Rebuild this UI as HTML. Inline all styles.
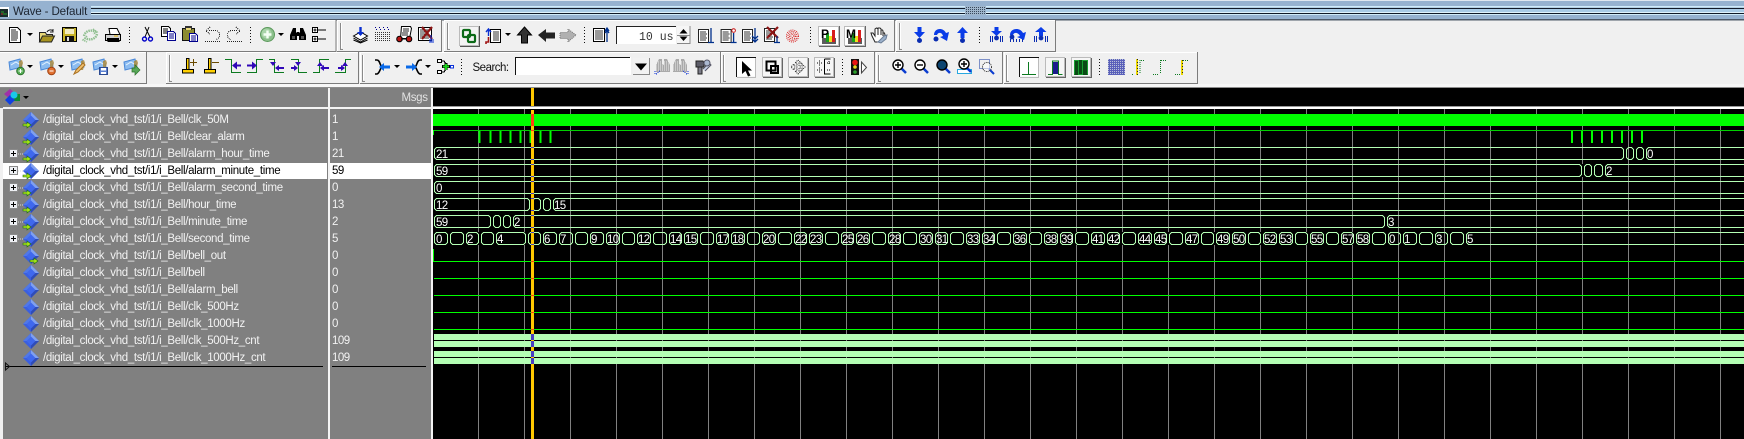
<!DOCTYPE html>
<html><head><meta charset="utf-8"><title>Wave - Default</title>
<style>
html,body{margin:0;padding:0;background:#f0f0f0;width:1744px;height:439px;overflow:hidden}
svg{display:block;position:absolute;left:0;top:0}
text{font-family:"Liberation Sans",Arial,sans-serif}
.n{font-size:11.5px;letter-spacing:-.33px;fill:#f2f2f2}
.v{font-size:11.5px;letter-spacing:-.5px;fill:#f2f2f2}
.w{font-size:11.5px;letter-spacing:-.6px;fill:#fff}
.c{shape-rendering:crispEdges}
</style></head><body>
<svg width="1744" height="439" viewBox="0 0 1744 439" xmlns="http://www.w3.org/2000/svg">
<defs>
<g id="x"><rect x="-3" y="0" width="6" height="13" fill="#000"/><path d="M-3.500.5l2 2v8l-2 2M3.500.5l-2 2v8l2 2" fill="none" stroke="#b4ffb4" shape-rendering="crispEdges"/></g>
<path id="t" d="M0 0h6l-3 3z" fill="#000"/>
<g id="d"><path d="M8 0l8 8-8 8-8-8z" fill="#3a5fe0"/><path d="M8 0l8 8H8z" fill="#7fa0f0"/><path d="M8 0L0 8h8z" fill="#5078e8"/><path d="M8 16l8-8H8z" fill="#2f4cb8"/><path d="M8 3.500l4.500 4.500-4.500 4.500L3.500 8z" fill="#3f68ee"/></g>
<path id="ga" d="M0 2h4V0l4 3-4 3V4H0z" fill="#a8e818" stroke="#1c6a10" stroke-width=".6"/>
<g id="pl"><rect x=".5" y=".5" width="8" height="8" fill="#eef0f4" stroke="#8a8a8a"/><path d="M2 4.500h5M4.500 2v5" stroke="#000"/><path d="M9 5h5" stroke="#d8d8d8" stroke-dasharray="1 1"/></g>
<g id="win"><path d="M1 3l11-3 2 8-12 3z" fill="#8cbcf0" stroke="#4a88d8"/><path d="M3 6l5-3 3 2 3-2" fill="none" stroke="#e4f2ff"/><path d="M11 2l3-1 1 3-2 7h-2z" fill="#a88a40" opacity=".85"/></g>
<g id="bin"><path d="M4 0h3v5l1 1v7H1V6zM12 0H9v5L8 6v7h7V6z" fill="#aaa"/><path d="M1 3h14M1 5h14M1 7h14M1 9h14M1 11h14" stroke="#eee" stroke-dasharray="1 1"/></g>
</defs>

<!-- title bar -->
<rect x="0" y="0" width="1744" height="19" fill="#96b2d0"/>
<rect x="0" y="0" width="1744" height="1" fill="#dfe7f0"/>
<rect x="0" y="19" width="1744" height="1.500" fill="#4f5b6a"/>
<g class="c">
<rect x="91" y="6" width="1653" height="1.500" fill="#cfeaf8"/>
<rect x="91" y="8" width="1653" height="1" fill="#111a28"/>
<rect x="91" y="9" width="1653" height="3" fill="#a9cbe6"/>
<rect x="91" y="12" width="1653" height="1" fill="#e0f2fb"/>
<rect x="91" y="13" width="1653" height="1" fill="#111a28"/>
<rect x="91" y="14" width="1653" height="1" fill="#cfeaf8"/>
<rect x="965" y="6" width="21" height="9" fill="#9fb6cc"/>
<path d="M966 7.500h19M966 9.500h19M966 11.500h19M966 13.500h19" stroke="#38485c" stroke-dasharray="1 1"/>
<rect x="0" y="7" width="9" height="10" fill="#fff"/>
<rect x="0" y="9" width="8" height="8" fill="#1a2a2a"/>
<path d="M1 12h3M3 14h4" stroke="#2ca02c"/><path d="M1 14h2" stroke="#c03030"/>
</g>
<text x="13" y="15" font-size="11.600" letter-spacing="-.15" fill="#1c2430">Wave - Default</text>

<!-- toolbar panels -->
<g fill="none" class="c">
<path d="M0 20.500H336M444.500 51V20.500H894M896.500 51V20.500H1055M337.500 51V20.500H441M166.500 83V52.500H358M360.500 83V52.500H720M721.500 83V52.500H875M876.500 83V52.500H1002M1004.500 83V52.500H1197M0 52.500H146" stroke="#fff"/>
<path d="M0 51.500H336M336 20V52M337 51.500H441M441.500 20V52M444 51.500H895M894.500 20V52M896 51.500H1056M1055.500 20V52M0 83.500H147M146.500 52V84M166 83.500H359M358.500 52V84M360 83.500H721M720.500 52V84M721 83.500H875M874.500 52V84M876 83.500H1003M1002.500 52V84M1004 83.500H1198M1197.500 52V84" stroke="#7c7c7c"/>
<path d="M340.500 23V49.500H343M447.500 23V49.500H450M899.500 23V49.500H902M169.500 55V81.500H172M362.500 55V81.500H365M723.500 55V81.500H726M878.500 55V81.500H881M1006.500 55V81.500H1009" stroke="#8a8a8a"/>
<path d="M341.500 23V48M448.500 23V48M900.500 23V48M170.500 55V80M363.500 55V80M724.500 55V80M879.500 55V80M1007.500 55V80" stroke="#fff"/>
<path d="M129.500 27V43M250.500 27V43M584.500 27V43M810.500 27V43M979.500 27V43M461.500 59V75M842.500 59V75M1099.500 59V75" stroke="#111" stroke-dasharray="1 2"/>
</g>
<rect x="0" y="84" width="1744" height="3" fill="#f7f7f7"/>
<rect x="0" y="87" width="1744" height="1" fill="#8c8c8c"/>

<!-- ROW 1 ICONS -->
<g transform="translate(8 27)" class="c"><path d="M1.500.5h8l3 3v12h-11z" fill="#fff" stroke="#000"/><path d="M3 3h5M3 5h7M3 7h7M3 9h7M3 11h7M3 13h6" stroke="#222"/></g>
<use href="#t" x="27" y="33"/>
<g transform="translate(39 29)"><path d="M.5 13V3.500h6l1 2h6v2" fill="#e8d878" stroke="#222"/><path d="M.5 13l3-6h12l-3 6z" fill="#a89420" stroke="#222"/><path d="M8 3c1-2 4-3 6-1" fill="none" stroke="#222"/><path d="M14 0v3h-3" fill="none" stroke="#222"/></g>
<g transform="translate(62 27)" class="c"><rect x=".5" y=".5" width="14" height="14" fill="#c8b428" stroke="#000"/><rect x="3" y="1" width="9" height="6" fill="#f2ecc0"/><rect x="3" y="1" width="9" height="1" fill="#5c5410"/><rect x="3" y="9" width="9" height="6" fill="#111"/><rect x="5" y="10" width="2" height="4" fill="#ddd"/></g>
<g transform="translate(82 28)" fill="none" stroke="#8fbf8f" stroke-width="2.400" stroke-dasharray="1.500 .8"><path d="M2 8c1-5 7-7 12-4"/><path d="M15 6c-1 5-7 7-12 4"/><path d="M11 1l4 3-4 2M5 8l-4 4 4 2" stroke-width="1.500"/></g>
<g transform="translate(105 28)"><path d="M4 .5h8l3 6H5z" fill="#fff" stroke="#000"/><path d="M.5 6.500h15v6h-15z" fill="#cfcfcf" stroke="#000"/><path d="M2 11h12" stroke="#000" stroke-width="2"/><path d="M3 12.500h11v1H3z" fill="#fff" stroke="#000"/><path d="M9 8h4" stroke="#e0b000"/></g>
<g transform="translate(142 27)"><path d="M3 0l5 10M7 0L3 10" stroke="#000" fill="none"/><circle cx="2.500" cy="12" r="2" fill="none" stroke="#0000c8" stroke-width="1.400"/><circle cx="8.500" cy="12" r="2" fill="none" stroke="#0000c8" stroke-width="1.400"/></g>
<g transform="translate(161 26)" class="c"><path d="M.5.5h7l2 2v8h-9z" fill="#fff" stroke="#000"/><path d="M2 3h5M2 5h5M2 7h5" stroke="#000"/><path d="M6.500 5.500h6l2 2v7h-8z" fill="#fff" stroke="#00008c"/><path d="M8 8h5M8 10h5M8 12h5" stroke="#00008c"/></g>
<g transform="translate(182 26)" class="c"><rect x=".5" y="2.500" width="12" height="12" fill="#8c8c30" stroke="#111"/><rect x="3" y="0" width="7" height="4" fill="#333"/><rect x="4" y="2" width="5" height="2" fill="#e8d878"/><path d="M7.500 7.500h6l2 2v6h-8z" fill="#fff" stroke="#00008c"/><path d="M9 10h5M9 12h5M9 14h5" stroke="#00008c"/></g>
<g transform="translate(205 27)" fill="none" stroke="#222" stroke-dasharray="1 1" class="c"><path d="M0 14.500h15"/><path d="M4 3.500h6c6 0 6 8 1 9"/><path d="M5 0L1 4l4 3"/></g>
<g transform="translate(226 27)" fill="none" stroke="#222" stroke-dasharray="1 1" class="c"><path d="M1 14.500h15"/><path d="M11 3.500H6c-6 0-6 8-1 9"/><path d="M10 0l4 4-4 3"/></g>
<g transform="translate(260 27)"><circle cx="7.500" cy="7.500" r="7" fill="#8cc08c" stroke="#5c9a5c"/><circle cx="6.500" cy="6.500" r="5" fill="#a8d4a8"/><path d="M3.500 7.500h8M7.500 3.500v8" stroke="#f4fff4" stroke-width="2.400"/></g>
<use href="#t" x="278" y="33"/>
<g transform="translate(290 27)" fill="#000"><path d="M3 1h3v4l1 1v7H0V8z"/><path d="M13 1h-3v4L9 6v7h7V8z"/><rect x="7" y="5" width="2" height="4"/><path d="M2 9h3v3H2zM11 9h3v3h-3z" fill="#555"/></g>
<g transform="translate(312 27)" class="c" fill="none" stroke="#000"><rect x=".5" y=".5" width="5" height="5" fill="#fff"/><path d="M1.500 3h3M3 1.500v3M6 3h8"/><rect x=".5" y="9.500" width="5" height="5" fill="#fff"/><path d="M1.500 12h3M3 10.500v3M6 12h8"/></g>

<g transform="translate(353 27)"><path d="M.5 9l7-4 7 4-7 4z" fill="#fff" stroke="#000"/><path d="M.5 11l7 4 7-4" fill="none" stroke="#000"/><path d="M.5 13l7 3 7-3" fill="none" stroke="#000"/><path d="M7.500 0v8" stroke="#0a2fd0" stroke-width="2.400"/><path d="M4 5l3.500 4L11 5z" fill="#0a2fd0"/></g>
<g transform="translate(374 26)" fill="none" stroke="#333" stroke-dasharray="1 1" class="c"><path d="M1 6.500h15M1 8.500h15M1 10.500h15M1 12.500h15M1 14.500h15"/><path d="M1 1.500h2M5 1.500h2M9 1.500h2M13 1.500h2M2 3.500h2M6 3.500h2M10 3.500h2M14 3.500h2" stroke="#00008c"/></g>
<g transform="translate(396 26)"><path d="M5.500.5h9l1 2-2 10h-9z" fill="#fff" stroke="#000"/><path d="M7 3h6M7 5h6M6 7h6M6 9h6" stroke="#222"/><circle cx="3.500" cy="13" r="2.800" fill="#b81414" stroke="#000"/><circle cx="13" cy="13" r="2.800" fill="#b81414" stroke="#000"/><path d="M5 13h6" stroke="#000"/></g>
<g transform="translate(418 27)"><rect x=".5" y=".5" width="13" height="13" fill="#fff" stroke="#000"/><path d="M2 3h9M2 5h9M2 7h9M2 9h9M2 11h9" stroke="#333"/><path d="M4 0l10 12M14 0L4 12" stroke="#8c1414" stroke-width="2.200"/><path d="M13 8v7" stroke="#0a2fd0"/><path d="M11 13h5M11 15h5" stroke="#0a2fd0"/></g>

<g class="c"><rect x="459.500" y="26.500" width="19" height="19" fill="#f4f4f4" stroke="#bbb"/><path d="M460 46.500h20M479.500 26v21" stroke="#555"/></g>
<g transform="translate(462 29)" fill="none" stroke="#0c6a18" stroke-width="2.200"><rect x="1" y="1" width="7" height="7" rx="1"/><rect x="6" y="6" width="7" height="7" rx="1"/></g>
<g transform="translate(485 29)"><rect x="5.500" y=".5" width="10" height="13" fill="#fff" stroke="#000"/><path d="M8 3h6M8 5h6M8 7h6M8 9h6M8 11h6" stroke="#333"/><path d="M3.500 7V1M1 3l2.500-3L6 3" fill="none" stroke="#0a2fd0" stroke-width="1.400"/><path d="M3.500 8v5H1v2" fill="none" stroke="#a01414" stroke-width="1.600"/></g>
<use href="#t" x="505" y="33"/>
<path d="M524.500 27l7 8h-4v8h-6v-8h-4z" fill="#333" stroke="#000"/>
<path d="M538 35l8-6v3.500h9v6h-9V42z" fill="#222"/>
<path d="M576 35l-8-6v3.500h-8v6h8V42z" fill="#b0b0b0" stroke="#777" stroke-dasharray="1 1"/>

<g transform="translate(593 27)"><rect x=".5" y="1.500" width="11" height="13" fill="#fff" stroke="#000"/><path d="M2 4h8M2 6h8M2 8h8M2 10h8M2 12h8" stroke="#333"/><path d="M14 15V2M12 4l2-3 2 3M12 6l2-3 2 3" fill="none" stroke="#00308c" stroke-width="1.300"/></g>
<rect x="616" y="26" width="60" height="18" fill="#fff"/>
<path d="M616.500 44V26.500H676" fill="none" stroke="#222" class="c"/>
<text x="673.500" y="40" text-anchor="end" font-size="11.500" style="font-family:'Liberation Mono',monospace" fill="#333">10 us</text>
<g class="c"><rect x="677" y="26" width="13" height="9" fill="#f6f6f6"/><rect x="677" y="35" width="13" height="9" fill="#f6f6f6"/><path d="M677 35.500h13" stroke="#888"/><path d="M690 26v18M677 43.500h13" stroke="#888"/></g>
<path d="M683.500 29l4 4.500h-8zM683.500 41l4-4.500h-8z" fill="#000"/>
<g transform="translate(698 28)"><rect x=".5" y="1.500" width="10" height="13" fill="#fff" stroke="#222"/><path d="M2 4h6M2 6h7M2 8h6M2 10h7M2 12h6" stroke="#333"/><path d="M13 0v14M10 14.500h6" stroke="#00308c" stroke-width="1.300"/></g>
<g transform="translate(720.600 28)"><rect x=".5" y="1.500" width="10" height="13" fill="#fff" stroke="#222"/><path d="M2 4h6M2 6h7M2 8h6M2 10h7M2 12h6" stroke="#333"/><path d="M13 5v9M10 14.500h6" stroke="#00308c" stroke-width="1.300"/><circle cx="13" cy="2.500" r="1.800" fill="#fff" stroke="#c81414"/></g>
<g transform="translate(742 28)"><rect x=".5" y="1.500" width="10" height="13" fill="#fff" stroke="#222"/><path d="M2 4h6M2 6h7M2 8h6M2 10h7M2 12h6" stroke="#333"/><path d="M13 0v14M10 11l3 3 3-3M10 8l3 3 3-3" fill="none" stroke="#00308c" stroke-width="1.300"/></g>
<g transform="translate(764 27)"><rect x=".5" y="1.500" width="10" height="13" fill="#fff" stroke="#222"/><path d="M2 4h6M2 6h7M2 8h6M2 10h7M2 12h6" stroke="#333"/><path d="M3 0l11 11M14 0L3 11" stroke="#8c1414" stroke-width="2.200"/><path d="M13 9v6M10 15.500h6" stroke="#00308c" stroke-width="1.300"/></g>
<g transform="translate(786 29)" fill="none" stroke="#d81c1c" stroke-dasharray="1 1"><circle cx="6.500" cy="7" r="6"/><circle cx="6.500" cy="7" r="4.500"/><circle cx="6.500" cy="7" r="3"/><circle cx="6.500" cy="7" r="1.500"/></g>

<g class="c"><rect x="818.500" y="26.500" width="20" height="19" fill="#fff" stroke="#bbb"/><path d="M819 46.500h21M839.500 26v21" stroke="#666"/><rect x="844.500" y="26.500" width="20" height="19" fill="#fff" stroke="#bbb"/><path d="M845 46.500h21M865.500 26v21" stroke="#666"/></g>
<g class="c"><rect x="822" y="38" width="14" height="6" fill="#5c5c5c"/><rect x="826" y="33" width="3" height="9" fill="#18a018"/><rect x="829" y="36" width="3" height="6" fill="#f0e020"/><rect x="832" y="30" width="3" height="12" fill="#d81c1c"/><rect x="848" y="38" width="14" height="6" fill="#5c5c5c"/><rect x="852" y="33" width="3" height="9" fill="#18a018"/><rect x="855" y="36" width="3" height="6" fill="#f0e020"/><rect x="858" y="30" width="3" height="12" fill="#d81c1c"/></g>
<text x="821" y="38" font-size="12" font-weight="bold" fill="#000">P</text>
<text x="846" y="38" font-size="12" font-weight="bold" fill="#000">M</text>
<g transform="translate(870 27)"><path d="M5 15L2 9 1 6l2 0 2 3V2l1.500-1L8 2V1l2 0 1 1v1l1.500 0 .5 1v2l1.500 0 .5 2-2 5-3 2z" fill="#fff" stroke="#222"/><path d="M8 2v6M11 3v5M13 6v3" stroke="#222"/><path d="M8 15l6-6 3-1-1 4-5 4z" fill="#9db2cc" stroke="#6a7c94"/></g>

<g fill="#0a3ce8">
<g transform="translate(914 27)"><path d="M3.500 0h4v5H11L5.500 11 0 5h3.500z"/><circle cx="5.500" cy="13.500" r="2.500" fill="#0a2cb0"/></g>
<g transform="translate(933 27)"><path d="M1 8c0-7 9-8 12-2l3-1-2 9-7-4 3-1C9 5 5 5 4 8z"/><circle cx="3" cy="12" r="2.500" fill="#0a2cb0"/></g>
<g transform="translate(957 27)"><path d="M3.500 11h4V6H11L5.500 0 0 6h3.500z"/><circle cx="5.500" cy="13.500" r="2.500" fill="#0a2cb0"/></g>
<g transform="translate(990 27)"><path d="M4.500 0h4v4H12L6.500 9 1 4h3.500z"/><circle cx="6.500" cy="11" r="2.400" fill="#0a2cb0"/><path d="M0 9h1v6H0zM2 9h1v6H2zM10 9h1v6h-1zM12 9h1v6h-1z" fill="#0a2cb0"/></g>
<g transform="translate(1009 27)"><path d="M1 8c0-7 10-8 13-2l3-1-2 8-7-3 3-1C9 5 5 5 4 8z"/><circle cx="3" cy="10" r="2.400" fill="#0a2cb0"/><path d="M1 12h1v3H1zM4 12h1v3H4zM7 12h1v3H7zM10 12h1v3h-1zM13 12h1v3h-1z" fill="#0a2cb0"/></g>
<g transform="translate(1034 27)"><path d="M5 9h4V5h3.500L7 0 1 5h4z"/><circle cx="7" cy="11" r="2.400" fill="#0a2cb0"/><path d="M0 9h1v6H0zM2 9h1v6H2zM11 9h1v6h-1zM13 9h1v6h-1z" fill="#0a2cb0"/></g>
</g>

<!-- ROW 2 ICONS -->
<g transform="translate(8 59)"><use href="#win"/><circle cx="12.500" cy="12" r="3.800" fill="#58b058" stroke="#2a702a"/><path d="M10.500 12h4M12.500 10v4" stroke="#fff"/></g><use href="#t" x="27" y="65"/>
<g transform="translate(39 59)"><use href="#win"/><circle cx="12.500" cy="12" r="3.800" fill="#e07030" stroke="#a04010"/><path d="M10.500 12h4" stroke="#fff"/></g><use href="#t" x="58" y="65"/>
<g transform="translate(70 59)"><use href="#win"/><path d="M4 15l2-4 7-7 2 2-7 7z" fill="#f0c070" stroke="#a87020"/></g>
<g transform="translate(92 59)"><use href="#win"/><rect x="7.500" y="8.500" width="8" height="7" fill="#5a80d0" stroke="#2c4a90"/><rect x="9" y="9" width="5" height="2.500" fill="#fff"/><rect x="9" y="13" width="5" height="2" fill="#fff"/></g><use href="#t" x="112" y="65"/>
<g transform="translate(123 59)"><use href="#win"/><path d="M9 9h3V6l5 5-5 5v-3H9z" fill="#58a858" stroke="#2a702a" stroke-width=".7"/></g>

<g transform="translate(182 58)" stroke="#000" class="c"><rect x=".5" y="11.500" width="11" height="3.500" fill="#ffd000"/><rect x="4.500" y=".5" width="2.500" height="11" fill="#ffd000"/><path d="M8 4.500h7M11.500 1v7" stroke="#6a4a00"/></g>
<g transform="translate(204 58)" stroke="#000" class="c"><rect x=".5" y="11.500" width="11" height="3.500" fill="#ffd000"/><rect x="4.500" y=".5" width="2.500" height="11" fill="#ffd000"/><path d="M8 4.500h7" stroke="#6a4a00"/></g>

<g fill="none" stroke="#0c7a20" class="c">
<path d="M225 59.500h6.500v13H241M263 59.500h-6.500v13H247M269 59.500h5.500v13H284M291 59.500h7.500v13H307M313 72.500h6.500v-13H329M335 72.500h10.500v-13H351"/>
</g>
<g fill="#3008b8">
<path d="M232 65.500l5-4v3h4v2h-4v3zM257 65.500l-5-4v3h-5v2h5v3z"/>
<path d="M275 68l4-3v2h5v2h-5v2zM298 68l-4-3v2h-3v2h3v2zM320 68l4-3v2h5v2h-5v2zM345 68l-4-3v2h-3v2h3v2z"/>
<path d="M270 62h6l-3 4zM295 62h6l-3 4zM317 66h6l-3-4zM342 66h6l-3-4z"/>
</g>

<path d="M375 60h2c3 0 3 6 5 7-2 1-2 6-5 7h-2" fill="none" stroke="#000" stroke-width="1.600"/>
<path d="M379 67l5-4v2.500h6v3h-6v2.500z" fill="#0a6ae8"/>
<use href="#t" x="394" y="65"/>
<path d="M422 60h-2c-3 0-3 6-5 7 2 1 2 6 5 7h2" fill="none" stroke="#000" stroke-width="1.600"/>
<path d="M417 67l-5-4v2.500h-6v3h6v2.500z" fill="#0a6ae8"/>
<use href="#t" x="425" y="65"/>
<g class="c"><rect x="437.500" y="59.500" width="4" height="3" fill="#fff" stroke="#000"/><rect x="437.500" y="70.500" width="4" height="3" fill="#fff" stroke="#000"/><path d="M442 61h2l2 3M442 72h2l2-3" fill="none" stroke="#000"/><path d="M442 66.500h8M446 63v7" stroke="#000" stroke-width="3"/><path d="M443 66.500h6M446 64v6" stroke="#18d018" stroke-width="2"/><path d="M450 66.500h1" stroke="#0a30d8"/><rect x="450.500" y="65.500" width="3" height="2.500" fill="#fff" stroke="#0a30d8"/></g>

<text x="472.500" y="71" font-size="11.500" letter-spacing="-.5" fill="#111">Search:</text>
<rect x="515" y="57" width="116" height="18" fill="#fff"/>
<path d="M515.500 75V57.500H630" fill="none" stroke="#111" class="c"/>
<rect x="633" y="58" width="17" height="17" fill="#f2f2f2"/>
<path d="M649.500 58v17M633 74.500h17" stroke="#888" class="c"/>
<path d="M635 63.500h12l-6 7z" fill="#000"/>
<g transform="translate(655 59)" class="c"><use href="#bin"/><path d="M1 15l4-3M0 12v3h3" fill="none" stroke="#0a30d8" stroke-dasharray="1 1"/></g>
<g transform="translate(672 59)" class="c"><use href="#bin"/><path d="M15 15l-4-3M16 12v3h-3" fill="none" stroke="#0a30d8" stroke-dasharray="1 1"/></g>
<g transform="translate(695 59)"><path d="M1 2h7l1 2v4H1z" fill="#5c5c68" stroke="#222"/><rect x="3" y="8" width="4" height="7" fill="#7c7c88" stroke="#222"/><path d="M8 10l6-6 2 2-6 6" fill="#c8d4e8" stroke="#556"/><circle cx="12" cy="4" r="3" fill="#aab8d0" stroke="#556"/></g>

<g class="c"><rect x="736.500" y="57.500" width="19" height="19" fill="#fff"/><path d="M736.500 77V57.500H756" fill="none" stroke="#111"/><path d="M737 77.500h19M755.500 58v20" stroke="#bbb"/>
<rect x="762.500" y="57.500" width="19" height="19" fill="#f6f6f6" stroke="#bbb"/><path d="M763 77.500h20M782.500 58v20" stroke="#666"/>
<rect x="788.500" y="57.500" width="19" height="19" fill="#f6f6f6" stroke="#bbb"/><path d="M789 77.500h20M808.500 58v20" stroke="#666"/>
<rect x="814.500" y="57.500" width="19" height="19" fill="#f6f6f6" stroke="#bbb"/><path d="M815 77.500h20M834.500 58v20" stroke="#666"/></g>
<path d="M742 61l10 9.500h-4l2.500 5-2.500 1-2.500-5.500-3.500 3z" fill="#000"/>
<g fill="none" stroke="#000" class="c"><rect x="766.500" y="61.500" width="9" height="9" stroke-width="2"/><rect x="771" y="66" width="7" height="7" stroke-width="2"/></g>
<g transform="translate(790 59)" fill="none" stroke="#222" stroke-dasharray="1 1"><path d="M8 1l3 3H9v3h3V5l3 3-3 3V9H9v3h2l-3 3-3-3h2V9H4v2L1 8l3-3v2h3V4H5z"/></g>
<g transform="translate(816 59)" class="c" stroke="#000" fill="none"><path d="M8.500 0v15h6M8.500 0h6"/><path d="M1 4h5M3.500 1.500v5M1 11h5M3.500 8.500v5M11 4h4M13 2v4M11 11h4" stroke-dasharray="1 1"/></g>
<g class="c"><rect x="851" y="59" width="8" height="16" fill="#111"/></g><circle cx="855" cy="62.500" r="2.800" fill="#e81414"/><circle cx="855" cy="67" r="1.800" fill="#e8d820"/><circle cx="855" cy="72" r="1.800" fill="#2ca02c"/><path d="M861.500 62v11l5-5.500z" fill="#fff" stroke="#444"/>

<g transform="translate(892 59)"><path d="M9 9l5 5" stroke="#0a3cd0" stroke-width="2.500"/><circle cx="6" cy="6" r="5" fill="#fff" stroke="#000" stroke-width="1.400"/><path d="M3 6h6M6 3v6" stroke="#000" stroke-width="1.400"/></g>
<g transform="translate(914 59)"><path d="M9 9l5 5" stroke="#0a3cd0" stroke-width="2.500"/><circle cx="6" cy="6" r="5" fill="#fff" stroke="#000" stroke-width="1.400"/><path d="M3 6h6" stroke="#000" stroke-width="1.400"/></g>
<g transform="translate(936 59)"><path d="M9 9l5 5" stroke="#0a3cd0" stroke-width="2.500"/><circle cx="6" cy="6" r="5" fill="#0c4470" stroke="#000" stroke-width="1.400"/></g>
<g transform="translate(957 58)"><rect x=".5" y="11.500" width="14" height="4" fill="#fff" stroke="#28a8e0"/><path d="M9 9l5 5" stroke="#0a3cd0" stroke-width="2.500"/><circle cx="7" cy="6" r="5" fill="#fff" stroke="#000" stroke-width="1.400"/><path d="M4 6h6M7 3v6" stroke="#000" stroke-width="1.400"/></g>
<g transform="translate(979 59)"><rect x=".5" y=".5" width="10" height="9" fill="none" stroke="#0a30a0" stroke-dasharray="1 1"/><path d="M10 10l5 5" stroke="#0a3cd0" stroke-width="2"/><circle cx="8" cy="8" r="4.500" fill="#fff" fill-opacity=".5" stroke="#333" stroke-dasharray="1 .8"/></g>

<g class="c"><rect x="1019.500" y="57.500" width="19" height="19" fill="#fff"/><path d="M1019.500 77V57.500H1039" fill="none" stroke="#111"/><path d="M1020 77.500h19M1038.500 58v20" stroke="#bbb"/>
<rect x="1045.500" y="57.500" width="19" height="19" fill="#f6f6f6" stroke="#bbb"/><path d="M1046 77.500h20M1065.500 58v20" stroke="#666"/>
<rect x="1071.500" y="57.500" width="19" height="19" fill="#f6f6f6" stroke="#bbb"/><path d="M1072 77.500h20M1091.500 58v20" stroke="#666"/>
<path d="M1028.500 62v12M1022 74.500h14" fill="none" stroke="#0c7a20"/>
<path d="M1048 74.500h4.500V61h6v13.500h4" fill="none" stroke="#0c7a20"/><rect x="1053" y="62" width="5" height="12" fill="#1a1a8c"/>
<rect x="1074" y="60" width="14" height="15" fill="#0a4a14"/><path d="M1074.500 74.500v-14h4v14h4v-14h5v14" fill="none" stroke="#18a030"/></g>

<g class="c"><rect x="1108" y="59" width="17" height="16" fill="#2830a8" opacity=".75"/><path d="M1108 59.500h17M1108 61.500h17M1108 63.500h17M1108 65.500h17M1108 67.500h17M1108 69.500h17M1108 71.500h17M1108 73.500h17" stroke="#b8c0d8" stroke-dasharray="1 1"/>
<path d="M1137 59v16" stroke="#ecd800" stroke-width="2"/><path d="M1137.500 59v16" stroke="#222" stroke-dasharray="1 2"/><path d="M1141 60.500h4M1133 74.500h-2M1140 60v14" fill="none" stroke="#0c7a20" stroke-dasharray="1 1"/>
<path d="M1153 74.500h6M1160.500 60v14M1161 60.500h6" fill="none" stroke="#0c7a20" stroke-dasharray="1 1"/>
<path d="M1175 74.500h6M1182 60v14" fill="none" stroke="#0c7a20" stroke-dasharray="1 1"/><path d="M1182 60v15" stroke="#ecd800" stroke-width="2"/><path d="M1182.500 60v15" stroke="#222" stroke-dasharray="1 2"/><path d="M1183 60.500h6" stroke="#0c7a20" stroke-dasharray="1 1"/></g>

<!-- LEFT PANE -->
<g class="c">
<rect x="0" y="88" width="328" height="351" fill="#808080"/>
<rect x="0" y="108" width="3" height="331" fill="#f0f0f0"/>
<rect x="3" y="107" width="325" height="2" fill="#f4f4f4"/>
<rect x="328" y="88" width="2" height="351" fill="#f4f4f4"/>
<rect x="330" y="88" width="101" height="351" fill="#808080"/>
<rect x="330" y="107" width="101" height="2" fill="#f4f4f4"/>
<rect x="431" y="88" width="2" height="351" fill="#f4f4f4"/>
<rect x="3" y="163" width="324" height="16" fill="#fff"/>
<rect x="330" y="163" width="101" height="16" fill="#fff"/>
</g>
<g transform="translate(4 89)"><path d="M6 0l6 5-6 5-6-5z" fill="#a030a8"/><rect x="9" y="5" width="7" height="7" fill="#108a30"/><path d="M6 6l5 5-5 5-5-5z" fill="#1040e0"/><circle cx="10" cy="6" r="3.500" fill="#18c8e8"/></g>
<use href="#t" x="23" y="96"/>
<text x="401.500" y="101" class="n" style="fill:#e2e2e2">Msgs</text>

<g id="icons">
<use href="#d" x="23" y="112"/><use href="#ga" x="23" y="122"/>
<use href="#d" x="23" y="129"/><use href="#ga" x="23" y="139"/>
<use href="#d" x="23" y="146"/><use href="#ga" x="23" y="156"/><use href="#pl" x="9" y="149"/>
<use href="#d" x="23" y="163"/><use href="#ga" x="23" y="173"/><use href="#pl" x="9" y="166"/>
<use href="#d" x="23" y="180"/><use href="#ga" x="23" y="190"/><use href="#pl" x="9" y="183"/>
<use href="#d" x="23" y="197"/><use href="#ga" x="23" y="207"/><use href="#pl" x="9" y="200"/>
<use href="#d" x="23" y="214"/><use href="#ga" x="23" y="224"/><use href="#pl" x="9" y="217"/>
<use href="#d" x="23" y="231"/><use href="#ga" x="23" y="241"/><use href="#pl" x="9" y="234"/>
<use href="#d" x="23" y="248"/><use href="#ga" x="30" y="258"/>
<use href="#d" x="23" y="265"/>
<use href="#d" x="23" y="282"/>
<use href="#d" x="23" y="299"/>
<use href="#d" x="23" y="316"/>
<use href="#d" x="23" y="333"/>
<use href="#d" x="23" y="350"/>
</g>

<text class="n" x="43" y="123">/digital_clock_vhd_tst/i1/i_Bell/clk_50M</text>
<text class="n" x="43" y="140">/digital_clock_vhd_tst/i1/i_Bell/clear_alarm</text>
<text class="n" x="43" y="157">/digital_clock_vhd_tst/i1/i_Bell/alarm_hour_time</text>
<text class="n" x="43" y="174" style="fill:#000">/digital_clock_vhd_tst/i1/i_Bell/alarm_minute_time</text>
<text class="n" x="43" y="191">/digital_clock_vhd_tst/i1/i_Bell/alarm_second_time</text>
<text class="n" x="43" y="208">/digital_clock_vhd_tst/i1/i_Bell/hour_time</text>
<text class="n" x="43" y="225">/digital_clock_vhd_tst/i1/i_Bell/minute_time</text>
<text class="n" x="43" y="242">/digital_clock_vhd_tst/i1/i_Bell/second_time</text>
<text class="n" x="43" y="259">/digital_clock_vhd_tst/i1/i_Bell/bell_out</text>
<text class="n" x="43" y="276">/digital_clock_vhd_tst/i1/i_Bell/bell</text>
<text class="n" x="43" y="293">/digital_clock_vhd_tst/i1/i_Bell/alarm_bell</text>
<text class="n" x="43" y="310">/digital_clock_vhd_tst/i1/i_Bell/clk_500Hz</text>
<text class="n" x="43" y="327">/digital_clock_vhd_tst/i1/i_Bell/clk_1000Hz</text>
<text class="n" x="43" y="344">/digital_clock_vhd_tst/i1/i_Bell/clk_500Hz_cnt</text>
<text class="n" x="43" y="361">/digital_clock_vhd_tst/i1/i_Bell/clk_1000Hz_cnt</text>

<text class="v" x="332" y="123">1</text>
<text class="v" x="332" y="140">1</text>
<text class="v" x="332" y="157">21</text>
<text class="v" x="332" y="174" style="fill:#000">59</text>
<text class="v" x="332" y="191">0</text>
<text class="v" x="332" y="208">13</text>
<text class="v" x="332" y="225">2</text>
<text class="v" x="332" y="242">5</text>
<text class="v" x="332" y="259">0</text>
<text class="v" x="332" y="276">0</text>
<text class="v" x="332" y="293">0</text>
<text class="v" x="332" y="310">0</text>
<text class="v" x="332" y="327">0</text>
<text class="v" x="332" y="344">109</text>
<text class="v" x="332" y="361">109</text>

<g class="c"><rect x="5" y="366" width="318" height="1" fill="#000"/><rect x="332" y="366" width="94" height="1" fill="#000"/></g>
<path d="M5.500 363v7l4-3.500z" fill="none" stroke="#111"/>

<!-- WAVE -->
<g class="c">
<rect x="433" y="88" width="1311" height="351" fill="#000"/>
<rect x="433" y="106" width="1311" height="1" fill="#9a9a9a"/>
<rect x="433" y="107" width="1311" height="2" fill="#fff"/>
<path stroke="#808080" fill="none" d="M478.500 109V439M524.500 109V439M570.500 109V439M616.500 109V439M662.500 109V439M708.500 109V439M754.500 109V439M800.500 109V439M846.500 109V439M892.500 109V439M938.500 109V439M984.500 109V439M1030.500 109V439M1076.500 109V439M1122.500 109V439M1168.500 109V439M1214.500 109V439M1260.500 109V439M1306.500 109V439M1352.500 109V439M1398.500 109V439M1444.500 109V439M1490.500 109V439M1536.500 109V439M1582.500 109V439M1628.500 109V439M1674.500 109V439M1720.500 109V439"/>
<rect x="433" y="114" width="1311" height="12" fill="#00ff00"/>
<rect x="433" y="130" width="1311" height="1" fill="#00d000"/>
<path d="M433.500 130v5" stroke="#00ff00"/>
<path fill="#00ff00" d="M478.500 131h2v12h-2zM489.500 131h2v12h-2zM499.500 131h2v12h-2zM509.500 131h2v12h-2zM519.500 131h2v12h-2zM529.500 131h2v12h-2zM539.500 131h2v12h-2zM549.500 131h2v12h-2zM1571 131h2v12h-2zM1581 131h2v12h-2zM1591 131h2v12h-2zM1601 131h2v12h-2zM1611 131h2v12h-2zM1621 131h2v12h-2zM1631 131h2v12h-2zM1641 131h2v12h-2z"/>
<path stroke="#b4ffb4" fill="none" d="M436 147.500H1744M436 159.500H1744M436 164.500H1744M436 176.500H1744M436 181.500H1744M436 193.500H1744M436 198.500H1744M436 210.500H1744M436 215.500H1744M436 227.500H1744M436 232.500H1744M436 244.500H1744"/>
<path stroke="#b4ffb4" fill="none" d="M436.500 147.500l-2 2v8l2 2M436.500 164.500l-2 2v8l2 2M436.500 181.500l-2 2v8l2 2M436.500 198.500l-2 2v8l2 2M436.500 215.500l-2 2v8l2 2M436.500 232.500l-2 2v8l2 2"/>
<path fill="#00ff00" d="M433 249h1v13h-1zM434 261h1310v1H434zM434 278h1310v1H434zM434 295h1310v1H434zM434 312h1310v1H434zM434 329h1310v1H434z"/>
<rect x="434" y="334" width="1310" height="6" fill="#b4ffb4"/>
<rect x="434" y="341" width="1310" height="6" fill="#b4ffb4"/>
<rect x="434" y="351" width="1310" height="6" fill="#b4ffb4"/>
<rect x="434" y="358" width="1310" height="6" fill="#b4ffb4"/>
</g>
<g id="trans">
<use href="#x" x="1625" y="147"/><use href="#x" x="1635" y="147"/><use href="#x" x="1645" y="147"/>
<use href="#x" x="1583" y="164"/><use href="#x" x="1593" y="164"/><use href="#x" x="1604" y="164"/>
<use href="#x" x="542" y="198"/><use href="#x" x="552" y="198"/><use href="#x" x="531" y="198"/>
<use href="#x" x="492" y="215"/><use href="#x" x="502" y="215"/><use href="#x" x="512" y="215"/><use href="#x" x="1386" y="215"/>
<use href="#x" x="449" y="232"/><use href="#x" x="465" y="232"/><use href="#x" x="480" y="232"/><use href="#x" x="495" y="232"/><use href="#x" x="527" y="232"/><use href="#x" x="542" y="232"/><use href="#x" x="558" y="232"/><use href="#x" x="574" y="232"/><use href="#x" x="589" y="232"/><use href="#x" x="605" y="232"/><use href="#x" x="621" y="232"/><use href="#x" x="636" y="232"/><use href="#x" x="652" y="232"/><use href="#x" x="668" y="232"/><use href="#x" x="683" y="232"/><use href="#x" x="699" y="232"/><use href="#x" x="715" y="232"/><use href="#x" x="730" y="232"/><use href="#x" x="746" y="232"/><use href="#x" x="761" y="232"/><use href="#x" x="777" y="232"/><use href="#x" x="793" y="232"/><use href="#x" x="808" y="232"/><use href="#x" x="824" y="232"/><use href="#x" x="840" y="232"/><use href="#x" x="855" y="232"/><use href="#x" x="871" y="232"/><use href="#x" x="887" y="232"/><use href="#x" x="902" y="232"/><use href="#x" x="918" y="232"/><use href="#x" x="934" y="232"/><use href="#x" x="949" y="232"/><use href="#x" x="965" y="232"/><use href="#x" x="981" y="232"/><use href="#x" x="996" y="232"/><use href="#x" x="1012" y="232"/><use href="#x" x="1028" y="232"/><use href="#x" x="1043" y="232"/><use href="#x" x="1059" y="232"/><use href="#x" x="1074" y="232"/><use href="#x" x="1090" y="232"/><use href="#x" x="1106" y="232"/><use href="#x" x="1121" y="232"/><use href="#x" x="1137" y="232"/><use href="#x" x="1153" y="232"/><use href="#x" x="1168" y="232"/><use href="#x" x="1184" y="232"/><use href="#x" x="1200" y="232"/><use href="#x" x="1215" y="232"/><use href="#x" x="1231" y="232"/><use href="#x" x="1247" y="232"/><use href="#x" x="1262" y="232"/><use href="#x" x="1278" y="232"/><use href="#x" x="1294" y="232"/><use href="#x" x="1309" y="232"/><use href="#x" x="1325" y="232"/><use href="#x" x="1340" y="232"/><use href="#x" x="1355" y="232"/><use href="#x" x="1371" y="232"/><use href="#x" x="1387" y="232"/><use href="#x" x="1402" y="232"/><use href="#x" x="1418" y="232"/><use href="#x" x="1434" y="232"/><use href="#x" x="1449" y="232"/><use href="#x" x="1465" y="232"/>
</g>
<g>
<text class="w" x="436" y="158">21</text><text class="w" x="1647" y="158">0</text>
<text class="w" x="436" y="175">59</text><text class="w" x="1606" y="175">2</text>
<text class="w" x="436" y="192">0</text>
<text class="w" x="436" y="209">12</text><text class="w" x="554" y="209">15</text>
<text class="w" x="436" y="226">59</text><text class="w" x="514" y="226">2</text><text class="w" x="1388" y="226">3</text>
<text class="w" x="436" y="243">0</text><text class="w" x="467" y="243">2</text><text class="w" x="497" y="243">4</text><text class="w" x="544" y="243">6</text><text class="w" x="560" y="243">7</text><text class="w" x="591" y="243">9</text><text class="w" x="607" y="243">10</text><text class="w" x="638" y="243">12</text><text class="w" x="670" y="243">14</text><text class="w" x="685" y="243">15</text><text class="w" x="717" y="243">17</text><text class="w" x="732" y="243">18</text><text class="w" x="763" y="243">20</text><text class="w" x="795" y="243">22</text><text class="w" x="810" y="243">23</text><text class="w" x="842" y="243">25</text><text class="w" x="857" y="243">26</text><text class="w" x="889" y="243">28</text><text class="w" x="920" y="243">30</text><text class="w" x="936" y="243">31</text><text class="w" x="967" y="243">33</text><text class="w" x="983" y="243">34</text><text class="w" x="1014" y="243">36</text><text class="w" x="1045" y="243">38</text><text class="w" x="1061" y="243">39</text><text class="w" x="1092" y="243">41</text><text class="w" x="1108" y="243">42</text><text class="w" x="1139" y="243">44</text><text class="w" x="1155" y="243">45</text><text class="w" x="1186" y="243">47</text><text class="w" x="1217" y="243">49</text><text class="w" x="1233" y="243">50</text><text class="w" x="1264" y="243">52</text><text class="w" x="1280" y="243">53</text><text class="w" x="1311" y="243">55</text><text class="w" x="1342" y="243">57</text><text class="w" x="1357" y="243">58</text><text class="w" x="1389" y="243">0</text><text class="w" x="1404" y="243">1</text><text class="w" x="1436" y="243">3</text><text class="w" x="1467" y="243">5</text>
</g>
<!-- cursor -->
<g class="c">
<rect x="531" y="88" width="3" height="18" fill="#ffc800"/>
<rect x="531" y="110" width="3" height="329" fill="#ffc800"/>
<rect x="531" y="114" width="3" height="12" fill="#ff3c14"/>
<path fill="#ff3c14" d="M531 130h3v1h-3zM531 261h3v1h-3zM531 278h3v1h-3zM531 295h3v1h-3zM531 312h3v1h-3zM531 329h3v1h-3z"/>
<path fill="#4a3cc0" d="M531 147h3v1h-3zM531 159h3v1h-3zM531 164h3v1h-3zM531 176h3v1h-3zM531 181h3v1h-3zM531 193h3v1h-3zM531 198h3v1h-3zM531 210h3v1h-3zM531 215h3v1h-3zM531 227h3v1h-3zM531 232h3v1h-3zM531 244h3v1h-3zM531 334h3v6h-3zM531 341h3v6h-3zM531 351h3v6h-3zM531 358h3v6h-3z"/>
</g>
</svg>
</body></html>
